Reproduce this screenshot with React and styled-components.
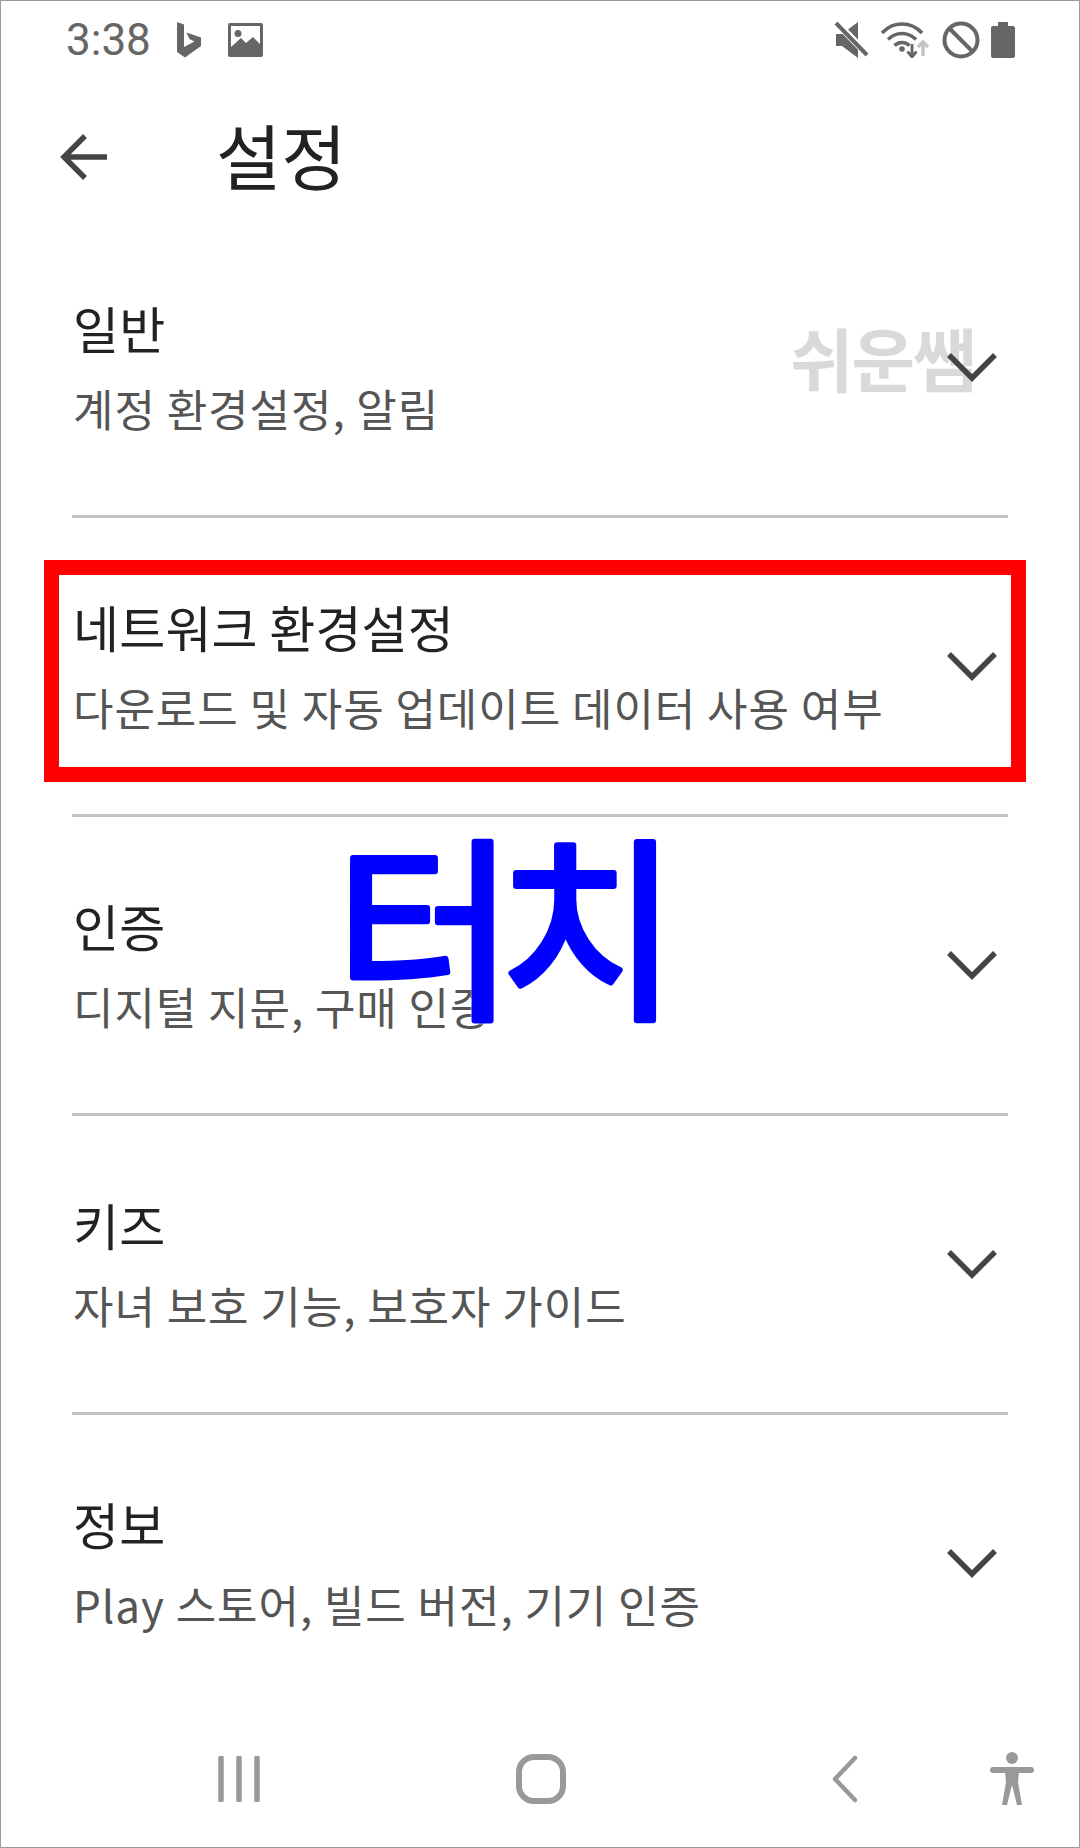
import React from "react";
import styled, { createGlobalStyle } from "styled-components";

const GlobalStyle = createGlobalStyle`
  html, body {
    margin: 0;
    padding: 0;
    background: #fff;
  }
`;

const KR = `"Noto Sans CJK KR", "Noto Sans", sans-serif`;

const Frame = styled.div`
  position: relative;
  box-sizing: border-box;
  width: 1080px;
  height: 1848px;
  border: 1px solid #9a9a9a;
  background: #fff;
  overflow: hidden;
  display: flex;
  flex-direction: column;
  font-family: ${KR};
`;

const StatusBar = styled.div`
  box-sizing: border-box;
  height: 75px;
  flex: none;
  display: flex;
  align-items: center;
  padding: 2px 64px 0 65px;
  color: #666;
`;

const Time = styled.span`
  font-family: Roboto, sans-serif;
  font-size: 44px;
  width: 110px;
`;

const StatusLeft = styled.div`
  display: flex;
  align-items: center;
  gap: 26px;
`;

const StatusRight = styled.div`
  margin-left: auto;
  display: flex;
  align-items: center;
  gap: 11px;
`;

const Header = styled.div`
  box-sizing: border-box;
  height: 143px;
  flex: none;
  display: flex;
  align-items: center;
  padding: 18px 0 0 59px;
`;

const BackButton = styled.svg`
  width: 50px;
  height: 50px;
  margin-right: 106px;
`;

const PageTitle = styled.h1`
  margin: -8px 0 0;
  font-size: 71px;
  line-height: 90px;
  font-weight: 400;
  color: #222;
`;

const List = styled.div`
  flex: 1;
  display: flex;
  flex-direction: column;
`;

const Row = styled.div`
  position: relative;
  height: 296px;
  flex: none;
  display: flex;
  align-items: center;
  justify-content: space-between;
  margin: 0 71px;
  border-bottom: ${(p) => (p.$last ? "none" : "3px solid #c4c4c4")};
`;

const RowText = styled.div`
  display: flex;
  flex-direction: column;
  gap: 20px;
  padding-left: 1px;
`;

const RowTitle = styled.div`
  font-size: 50px;
  line-height: 62px;
  color: #222;
  letter-spacing: 0.2px;
`;

const RowSub = styled.div`
  font-size: 44px;
  line-height: 60px;
  color: #555;
  letter-spacing: 0.95px;
  white-space: nowrap;
`;

const Chevron = styled.svg`
  position: relative;
  width: 50px;
  height: 30px;
  margin-right: 11px;
  flex: none;
`;

const Watermark = styled.div`
  position: absolute;
  left: 718px;
  top: 98px;
  font-size: 69px;
  line-height: 80px;
  font-weight: 700;
  color: #d9d9d9;
  letter-spacing: -2px;
`;

const Highlight = styled.div`
  position: absolute;
  left: 43px;
  top: 559px;
  width: 982px;
  height: 222px;
  box-sizing: border-box;
  border: 15px solid #ff0000;
`;

const TouchMark = styled.svg`
  position: absolute;
  left: 334px;
  top: 820px;
  width: 350px;
  height: 220px;
  overflow: visible;
  filter: drop-shadow(0 0 1px #fff);
`;

const TouchText = styled.text`
  font-family: ${KR};
  font-size: 196px;
  font-weight: 400;
  letter-spacing: -17px;
  fill: #0000ff;
  stroke: #0000ff;
  stroke-width: 6px;
  stroke-linejoin: round;
  stroke-linecap: round;
`;

const NavBar = styled.div`
  flex: 1;
  display: flex;
  align-items: center;
  padding: 0 44px 0 217px;
`;

const NavIcon = styled.svg`
  flex: none;
  margin-right: ${(p) => p.$gap || 0}px;
`;

const items = [
  { title: "일반", sub: "계정 환경설정, 알림" },
  { title: "네트워크 환경설정", sub: "다운로드 및 자동 업데이트 데이터 사용 여부" },
  { title: "인증", sub: "디지털 지문, 구매 인증" },
  { title: "키즈", sub: "자녀 보호 기능, 보호자 가이드" },
  { title: "정보", sub: "Play 스토어, 빌드 버전, 기기 인증" },
];

const BingIcon = () => (
  <svg width="26" height="36" viewBox="0 0 26 36">
    <path d="M1 0 L8 2.5 V25 L18.5 19.5 L13.5 17 L10.5 10.5 L25 15.5 V24 L9 35.5 L1 30Z" fill="#666" />
  </svg>
);

const PictureIcon = () => (
  <svg width="35" height="34" viewBox="0 0 35 34">
    <rect width="35" height="34" rx="2" fill="#666" />
    <path d="M3 3 H32 V21 L25 14 L18 20 L13 15 L3 24Z" fill="#fff" />
    <circle cx="10" cy="10.5" r="3.5" fill="#666" />
  </svg>
);

const MuteIcon = () => (
  <svg width="36" height="36" viewBox="0 0 36 36">
    <path d="M2 12 H8 L24 0 V36 L8 24 H2Z" fill="#666" />
    <path d="M3 1 L34 33" stroke="#fff" strokeWidth="7" />
    <path d="M2 1 L33 33" stroke="#666" strokeWidth="4" />
  </svg>
);

const WifiIcon = () => (
  <svg width="50" height="36" viewBox="0 0 50 36" fill="none">
    <path d="M1 11 C12 -1 30 -1 41 11" stroke="#666" strokeWidth="3.6" />
    <path d="M7 17.500 C15 9.500 27 9.500 35 17.500" stroke="#666" strokeWidth="3.6" />
    <path d="M13.500 23.500 C18 19.500 24 19.500 28.500 23.500" stroke="#666" strokeWidth="3.6" />
    <circle cx="21" cy="27" r="2.800" fill="#666" />
    <path d="M31 22 V35 M26.500 29.500 L31 35 L35.500 29.500" stroke="#666" strokeWidth="2.800" />
    <path d="M42 34 V20 M37 25 L42 20 L47 25" stroke="#c4c4c4" strokeWidth="3.400" />
  </svg>
);

const BanIcon = () => (
  <svg width="38" height="38" viewBox="0 0 38 38" fill="none">
    <circle cx="19" cy="19" r="16.500" stroke="#666" strokeWidth="4" />
    <path d="M7 7 L31 31" stroke="#666" strokeWidth="4" />
  </svg>
);

const BatteryIcon = () => (
  <svg width="24" height="36" viewBox="0 0 24 36">
    <path d="M7 0 H17 V4 H22 Q24 4 24 6 V34 Q24 36 22 36 H2 Q0 36 0 34 V6 Q0 4 2 4 H7Z" fill="#666" />
  </svg>
);

const App = () => (
  <>
    <GlobalStyle />
    <Frame>
      <StatusBar>
        <Time>3:38</Time>
        <StatusLeft>
          <BingIcon />
          <PictureIcon />
        </StatusLeft>
        <StatusRight>
          <MuteIcon />
          <WifiIcon />
          <BanIcon />
          <BatteryIcon />
        </StatusRight>
      </StatusBar>
      <Header>
        <BackButton viewBox="0 0 50 50" fill="none">
          <path d="M47 25 H4 M25 4 L4 25 L25 46" stroke="#444" strokeWidth="5.500" />
        </BackButton>
        <PageTitle>설정</PageTitle>
      </Header>
      <List>
        {items.map((item, i) => (
          <Row key={item.title} $last={i === items.length - 1}>
            <RowText>
              <RowTitle>{item.title}</RowTitle>
              <RowSub>{item.sub}</RowSub>
            </RowText>
            {i === 0 && <Watermark>쉬운쌤</Watermark>}
            <Chevron viewBox="0 0 50 30" fill="none">
              <path d="M2 3 L25 26 L48 3" stroke="#444" strokeWidth="5.500" />
            </Chevron>
          </Row>
        ))}
      </List>
      <NavBar>
        <NavIcon width="44" height="46" viewBox="0 0 44 46" $gap={254}>
          <path d="M3 2 V44 M21 2 V44 M39 2 V44" stroke="#999" strokeWidth="5.500" strokeLinecap="round" />
        </NavIcon>
        <NavIcon width="50" height="50" viewBox="0 0 50 50" $gap={264} fill="none">
          <rect x="3" y="3" width="44" height="44" rx="15" stroke="#999" strokeWidth="6" />
        </NavIcon>
        <NavIcon width="32" height="48" viewBox="0 0 32 48" $gap={128} fill="none">
          <path d="M25 3 L5 24 L25 45" stroke="#999" strokeWidth="4.500" strokeLinecap="round" strokeLinejoin="round" />
        </NavIcon>
        <NavIcon width="44" height="54" viewBox="0 0 44 54">
          <ellipse cx="22" cy="6" rx="6" ry="6" fill="#999" />
          <rect x="0" y="15" width="44" height="6" rx="3" fill="#999" />
          <path d="M15 20 H29 L28 30 L32 53 H27 L22 33 L17 53 H12 L16 30Z" fill="#999" />
        </NavIcon>
      </NavBar>
      <Highlight />
      <TouchMark viewBox="0 0 350 220">
        <TouchText x="0" y="183">터치</TouchText>
      </TouchMark>
    </Frame>
  </>
);

export default App;
